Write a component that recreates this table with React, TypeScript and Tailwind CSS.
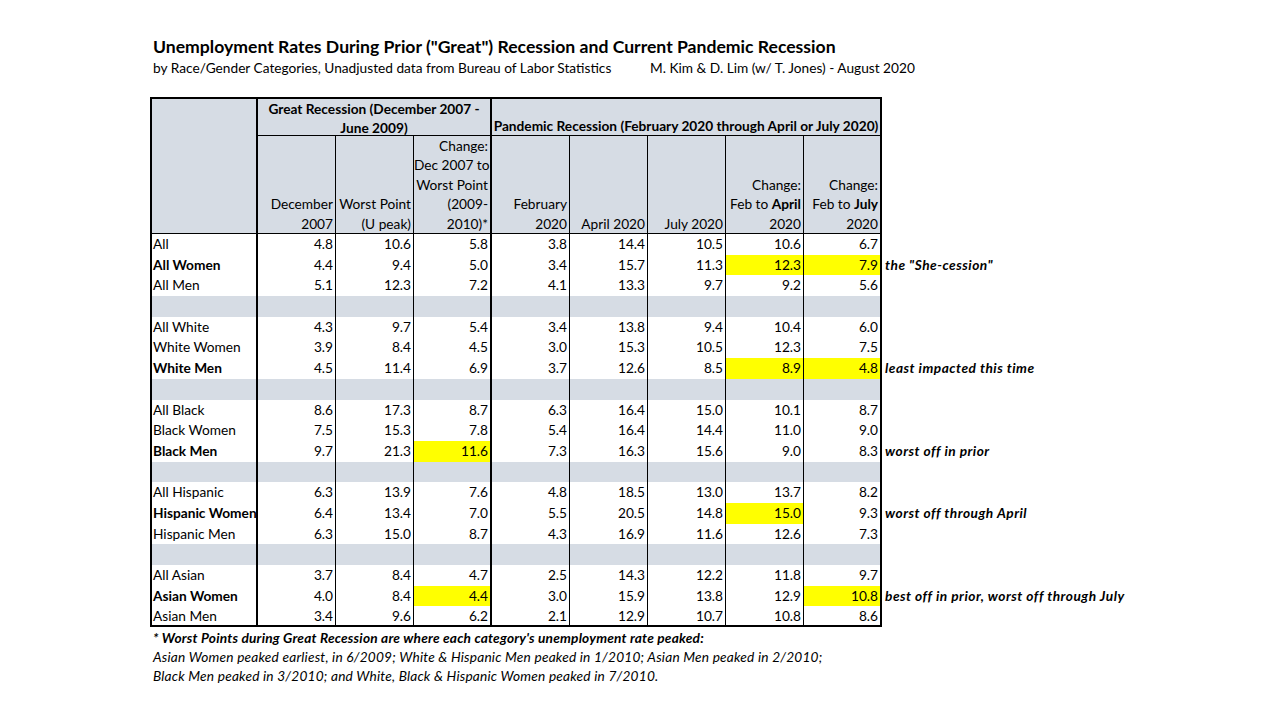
import React from "react";

type Row = { label: string; bold?: boolean; v: string[]; hl?: number[]; note?: string } | null;

const rows: Row[] = [
  { label: "All", v: ["4.8", "10.6", "5.8", "3.8", "14.4", "10.5", "10.6", "6.7"] },
  { label: "All Women", bold: true, v: ["4.4", "9.4", "5.0", "3.4", "15.7", "11.3", "12.3", "7.9"], hl: [6, 7], note: 'the "She-cession"' },
  { label: "All Men", v: ["5.1", "12.3", "7.2", "4.1", "13.3", "9.7", "9.2", "5.6"] },
  null,
  { label: "All White", v: ["4.3", "9.7", "5.4", "3.4", "13.8", "9.4", "10.4", "6.0"] },
  { label: "White Women", v: ["3.9", "8.4", "4.5", "3.0", "15.3", "10.5", "12.3", "7.5"] },
  { label: "White Men", bold: true, v: ["4.5", "11.4", "6.9", "3.7", "12.6", "8.5", "8.9", "4.8"], hl: [6, 7], note: "least impacted this time" },
  null,
  { label: "All Black", v: ["8.6", "17.3", "8.7", "6.3", "16.4", "15.0", "10.1", "8.7"] },
  { label: "Black Women", v: ["7.5", "15.3", "7.8", "5.4", "16.4", "14.4", "11.0", "9.0"] },
  { label: "Black Men", bold: true, v: ["9.7", "21.3", "11.6", "7.3", "16.3", "15.6", "9.0", "8.3"], hl: [2], note: "worst off in prior" },
  null,
  { label: "All Hispanic", v: ["6.3", "13.9", "7.6", "4.8", "18.5", "13.0", "13.7", "8.2"] },
  { label: "Hispanic Women", bold: true, v: ["6.4", "13.4", "7.0", "5.5", "20.5", "14.8", "15.0", "9.3"], hl: [6], note: "worst off through April" },
  { label: "Hispanic Men", v: ["6.3", "15.0", "8.7", "4.3", "16.9", "11.6", "12.6", "7.3"] },
  null,
  { label: "All Asian", v: ["3.7", "8.4", "4.7", "2.5", "14.3", "12.2", "11.8", "9.7"] },
  { label: "Asian Women", bold: true, v: ["4.0", "8.4", "4.4", "3.0", "15.9", "13.8", "12.9", "10.8"], hl: [2, 7], note: "best off in prior, worst off through July" },
  { label: "Asian Men", v: ["3.4", "9.6", "6.2", "2.1", "12.9", "10.7", "10.8", "8.6"] },
];

const colBorder = (i: number) => (i === 2 || i === 7 ? "border-r-2" : "border-r");

export default function App() {
  const font = { fontFamily: "Lato, 'Open Sans', sans-serif" };
  return (
    <div className="w-[1280px] h-[720px] bg-white text-black overflow-hidden" style={font}>
      <div className="pl-[150px] pt-[36px]">
        <div className="pl-[3px] text-[17.6px] font-bold leading-[22px] whitespace-nowrap">
          Unemployment Rates During Prior ("Great") Recession and Current Pandemic Recession
        </div>
        <div className="pl-[3px] text-[13.7px] leading-[20px] flex whitespace-nowrap">
          <span className="w-[497px]">by Race/Gender Categories, Unadjusted data from Bureau of Labor Statistics</span>
          <span>M. Kim &amp; D. Lim (w/ T. Jones) - August 2020</span>
        </div>

        <div className="mt-[19px] grid grid-cols-[108px_repeat(8,78px)_auto] text-[13.7px]">
          {/* header */}
          <div className="row-span-2 bg-[#d6dce4] border-l-2 border-t-2 border-r-2 border-b border-black h-[137px]" />
          <div className="col-span-3 bg-[#d6dce4] border-t-2 border-r-2 border-b border-black h-[39px] font-bold text-center leading-[19px] whitespace-nowrap">
            Great Recession (December 2007 -<br />June 2009)
          </div>
          <div className="col-span-5 bg-[#d6dce4] border-t-2 border-r-2 border-b border-black h-[39px] font-bold text-center leading-[19px] flex items-end justify-center whitespace-nowrap">
            Pandemic Recession (February 2020 through April or July 2020)
          </div>
          <div />
          {[
            <>December<br />2007</>,
            <>Worst Point<br />(U peak)</>,
            <>Change:<br />Dec 2007 to<br />Worst Point<br />(2009-<br />2010)*</>,
            <>February<br />2020</>,
            <>April 2020</>,
            <>July 2020</>,
            <>Change:<br />Feb to <b>April</b><br />2020</>,
            <>Change:<br />Feb to <b>July</b><br />2020</>,
          ].map((c, i) => (
            <div
              key={i}
              className={`bg-[#d6dce4] border-b border-black ${colBorder(i)} h-[98px] flex flex-col justify-end text-right leading-[19.4px] pr-[2px] whitespace-nowrap`}
            >
              <div>{c}</div>
            </div>
          ))}
          <div />

          {/* body */}
          {rows.map((r, ri) => {
            const last = ri === rows.length - 1;
            const bb = last ? "border-b-2" : "";
            if (!r) {
              return (
                <React.Fragment key={ri}>
                  <div className={`h-[20.7px] bg-[#d6dce4] border-l-2 border-r-2 border-black ${bb}`} />
                  {Array.from({ length: 8 }).map((_, i) => (
                    <div key={i} className={`h-[20.7px] bg-[#d6dce4] border-black ${colBorder(i)} ${bb}`} />
                  ))}
                  <div />
                </React.Fragment>
              );
            }
            return (
              <React.Fragment key={ri}>
                <div
                  className={`h-[20.7px] leading-[20.7px] border-l-2 border-r-2 border-black pl-[1px] whitespace-nowrap ${bb} ${r.bold ? "font-bold" : ""}`}
                >
                  {r.label}
                </div>
                {r.v.map((v, i) => (
                  <div
                    key={i}
                    className={`h-[20.7px] leading-[20.7px] text-right pr-[2px] border-black ${colBorder(i)} ${bb} ${r.hl && r.hl.includes(i) ? "bg-[#ffff00]" : ""}`}
                  >
                    {v}
                  </div>
                ))}
                <div className="h-[20.7px] leading-[20.7px] pl-[3px] font-bold italic whitespace-nowrap tracking-[0.5px]">
                  {r.note ?? ""}
                </div>
              </React.Fragment>
            );
          })}
        </div>

        <div className="pl-[3px] pt-[1px] text-[13.7px] italic leading-[19px] whitespace-nowrap tracking-[0.2px]">
          <div className="font-bold">* Worst Points during Great Recession are where each category's unemployment rate peaked:</div>
          <div>Asian Women peaked earliest, in 6/2009; White &amp; Hispanic Men peaked in 1/2010; Asian Men peaked in 2/2010;</div>
          <div>Black Men peaked in 3/2010; and White, Black &amp; Hispanic Women peaked in 7/2010.</div>
        </div>
      </div>
    </div>
  );
}
